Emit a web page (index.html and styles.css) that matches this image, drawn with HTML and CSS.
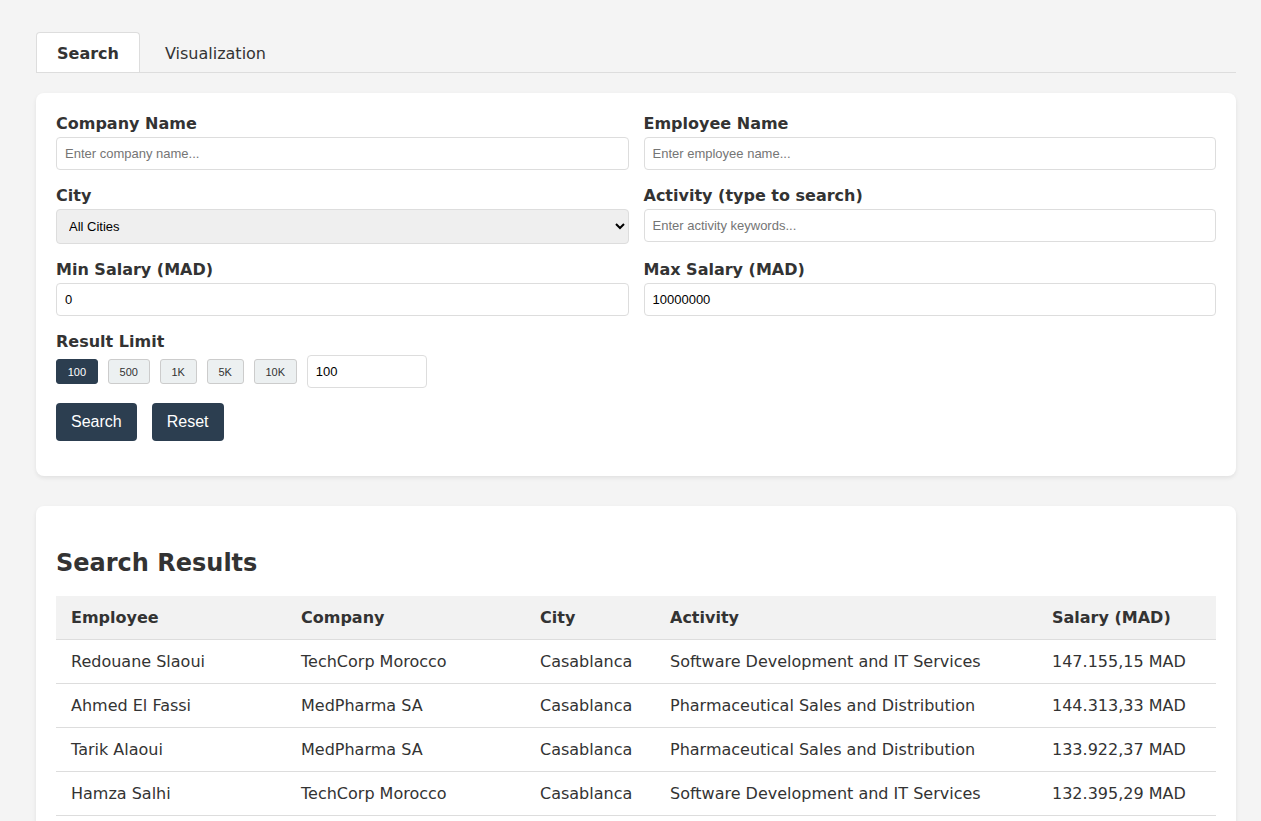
FILE: index.html
```html
<!DOCTYPE html>
<html lang="en">
<head>
<meta charset="utf-8">
<title>Salary Search</title>
<link rel="stylesheet" href="styles.css">
</head>
<body>
<div class="container">
  <div class="tabs">
    <div class="tab active">Search</div>
    <div class="tab">Visualization</div>
  </div>

  <div class="card">
    <div class="form-grid">
      <div class="form-group">
        <label>Company Name</label>
        <input type="text" placeholder="Enter company name...">
      </div>
      <div class="form-group">
        <label>Employee Name</label>
        <input type="text" placeholder="Enter employee name...">
      </div>
      <div class="form-group">
        <label>City</label>
        <select><option>All Cities</option></select>
      </div>
      <div class="form-group">
        <label>Activity (type to search)</label>
        <input type="text" placeholder="Enter activity keywords...">
      </div>
      <div class="form-group">
        <label>Min Salary (MAD)</label>
        <input type="text" value="0">
      </div>
      <div class="form-group">
        <label>Max Salary (MAD)</label>
        <input type="text" value="10000000">
      </div>
    </div>
    <div class="form-group">
      <label>Result Limit</label>
      <div class="limit-row">
        <button class="limit-btn selected">100</button>
        <button class="limit-btn">500</button>
        <button class="limit-btn">1K</button>
        <button class="limit-btn">5K</button>
        <button class="limit-btn">10K</button>
        <input type="text" class="limit-input" value="100">
      </div>
    </div>
    <div class="actions">
      <button class="btn">Search</button>
      <button class="btn">Reset</button>
    </div>
  </div>

  <div class="card results">
    <h2>Search Results</h2>
    <table>
      <thead>
        <tr>
          <th class="c-emp">Employee</th>
          <th class="c-comp">Company</th>
          <th class="c-city">City</th>
          <th class="c-act">Activity</th>
          <th class="c-sal">Salary (MAD)</th>
        </tr>
      </thead>
      <tbody>
        <tr><td>Redouane Slaoui</td><td>TechCorp Morocco</td><td>Casablanca</td><td>Software Development and IT Services</td><td>147.155,15 MAD</td></tr>
        <tr><td>Ahmed El Fassi</td><td>MedPharma SA</td><td>Casablanca</td><td>Pharmaceutical Sales and Distribution</td><td>144.313,33 MAD</td></tr>
        <tr><td>Tarik Alaoui</td><td>MedPharma SA</td><td>Casablanca</td><td>Pharmaceutical Sales and Distribution</td><td>133.922,37 MAD</td></tr>
        <tr><td>Hamza Salhi</td><td>TechCorp Morocco</td><td>Casablanca</td><td>Software Development and IT Services</td><td>132.395,29 MAD</td></tr>
        <tr><td>Youssef Bennani</td><td>AtlasBank</td><td>Rabat</td><td>Banking and Financial Services</td><td>128.410,02 MAD</td></tr>
      </tbody>
    </table>
  </div>
</div>
</body>
</html>
```

FILE: styles.css
```css
html, body {
  margin: 0;
  padding: 0;
}
body {
  background: #f4f4f4;
  font-family: "DejaVu Sans", Verdana, sans-serif;
  color: #333;
}
.container {
  width: 1200px;
  padding: 32px 0 30px 36px;
}
.tabs {
  display: flex;
  border-bottom: 1px solid #ddd;
  margin-bottom: 20px;
}
.tab {
  padding: 11px 20px 9px 20px;
  font-size: 16px;
  line-height: 19px;
  border: 1px solid transparent;
  border-bottom: none;
  border-radius: 4px 4px 0 0;
  margin-right: 4px;
  color: #333;
}
.tab.active {
  background: #fff;
  border-color: #ddd;
  font-weight: bold;
}
.card {
  background: #fff;
  border-radius: 8px;
  box-shadow: 0 2px 4px rgba(0, 0, 0, 0.08);
  padding: 20px;
  margin-bottom: 30px;
}
.form-grid {
  display: grid;
  grid-template-columns: 1fr 1fr;
  column-gap: 15px;
}
.form-group {
  margin-bottom: 15px;
}
.form-group label {
  display: block;
  font-weight: bold;
  font-size: 16px;
  line-height: 19px;
  padding-top: 1px;
  margin-bottom: 4px;
}
input, select {
  font-family: "Liberation Sans", Arial, sans-serif;
  font-size: 13px;
  color: #000;
}
.form-group input,
.form-group select {
  box-sizing: border-box;
  width: 100%;
  padding: 8px;
  border: 1px solid #ddd;
  border-radius: 4px;
  height: 33px;
}
.form-group select {
  height: 35px;
  background-color: #efefef;
  padding-left: 8px;
}
.form-group input::placeholder {
  color: #757575;
}
.limit-row {
  display: flex;
  align-items: center;
  gap: 10px;
}
.limit-btn {
  font-family: "Liberation Sans", Arial, sans-serif;
  font-size: 11px;
  height: 25px;
  padding: 0 10.75px;
  border: 1px solid #ccc;
  border-radius: 3px;
  background: #ecf0f1;
  color: #333;
}
.limit-btn.selected {
  background: #2c3e50;
  border-color: #2c3e50;
  color: #fff;
}
.form-group .limit-input {
  width: 120px;
}
.actions {
  display: flex;
  gap: 15px;
  margin-bottom: 15px;
}
.btn {
  font-family: "Liberation Sans", Arial, sans-serif;
  font-size: 16px;
  line-height: 18px;
  padding: 10px 15px;
  border: none;
  border-radius: 4px;
  background: #2c3e50;
  color: #fff;
}
.results h2 {
  font-size: 24px;
  line-height: 28px;
  margin: 23px 0 19px;
}
table {
  width: 100%;
  border-collapse: collapse;
  table-layout: fixed;
}
th, td {
  box-sizing: border-box;
  text-align: left;
  padding: 12px 15px;
  font-size: 16px;
  line-height: 19px;
  border-bottom: 1px solid #ddd;
  white-space: nowrap;
}
th {
  background: #f2f2f2;
  font-weight: bold;
}
.c-emp { width: 230px; }
.c-comp { width: 239px; }
.c-city { width: 130px; }
.c-act { width: 382px; }
.c-sal { width: 179px; }
```
